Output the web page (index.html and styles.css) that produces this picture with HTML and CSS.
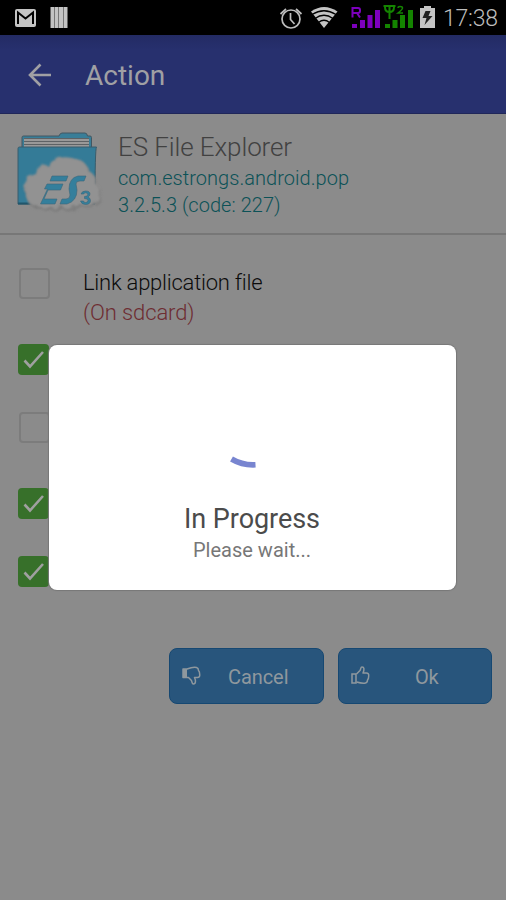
FILE: index.html
```html
<!DOCTYPE html>
<html lang="en">
<head>
<meta charset="utf-8">
<title>Action</title>
<link rel="stylesheet" href="styles.css">
</head>
<body>
<div class="screen">
  <div class="status">
    <svg class="status-left" width="60" height="35" viewBox="0 0 60 35">
      <rect x="7" y="9" width="21" height="18" rx="2" fill="#c4c4c4"/>
      <path d="M10 24V12.500l7.500 6 7.500-6V24" fill="none" stroke="#000" stroke-width="2"/>
      <path d="M42.500 7h17v21h-17z" fill="#c4c4c4"/>
      <path d="M46.500 7v21M50.500 7v21M55.500 7v21" stroke="#777"/>
    </svg>
    <svg class="status-right" width="165" height="35" viewBox="0 0 165 35">
      <g fill="none" stroke="#bdbdbd" stroke-width="1.700">
        <circle cx="21" cy="19" r="9"/>
        <path d="M20.500 13v6.500l4 4.500"/>
        <path d="M10.500 14l5.500-5M26 9l5.500 5"/>
      </g>
      <path d="M41 11.500Q54 2.500 67.500 11.500L54 28z" fill="#c4c4c4"/>
      <path d="M42 14.500Q54 7 66 14.500M45 18.500Q54 12 63 18.500M48.500 22.500Q54 18 59.500 22.500" fill="none" stroke="#000" stroke-width="1.300"/>
      <path d="M82.500 17.500V8H88q2 0 2 2v1q0 2-2 2h-5.500M87 13l3 4.500" fill="none" stroke="#7d00bd" stroke-width="2"/>
      <path d="M82 24h5v4h-5zM90 20h5v8h-5zM97.500 15h5v13h-5zM105 10h5v18h-5z" fill="#7d00bd"/>
      <path d="M113.500 6h12M115 7q0 5 4.500 5t4.500-5M119.500 6v13" fill="none" stroke="#148400" stroke-width="2"/>
      <path d="M128 8q0-1.500 2-1.500 2.500 0 2.500 1.500 0 1.500-4.500 5h5" fill="none" stroke="#148400" stroke-width="1.500"/>
      <path d="M115 24h5v4h-5zM122.500 20h5v8h-5zM130 15h5v13h-5zM138 10h5v18h-5z" fill="#148400"/>
      <path d="M150 8h4V6h7v2h4v20h-15z" fill="#c4c4c4"/>
      <path d="M155.500 11h5l-2 5h4l-8 9 2-7h-4z" fill="#222"/>
    </svg>
    <span class="clock">17:38</span>
  </div>
  <div class="header">
    <svg class="back" width="24" height="24" viewBox="0 0 24 24"><path d="M12.500 1.500L2 12l10.500 10.500M2 12h21" fill="none" stroke="#a0a0a4" stroke-width="2.600"/></svg>
    <span class="title">Action</span>
  </div>
  <div class="app">
    <svg class="logo" width="90" height="90" viewBox="0 0 90 90">
      <defs><filter id="soft" x="-10%" y="-10%" width="120%" height="120%"><feTurbulence type="fractalNoise" baseFrequency=".16" numOctaves="2"/><feDisplacementMap in="SourceGraphic" scale="7"/><feGaussianBlur stdDeviation="1.200"/></filter></defs>
      <path d="M8 20V7.500q0-1.500 1.500-1.500H45q1-3 3-3h23q2 0 2.500 3H76q1.500 0 1.500 1.500V20z" fill="#397e98" stroke="#425762"/>
      <path d="M10 8h65v10H10z" fill="#999"/>
      <path d="M10 8.500h65M10 11.500h65M10 14.500h65" stroke="#5e6265"/>
      <path d="M5.500 17h77q-1.500 2-1.500 57H4V18.500q0-1.500 1.500-1.500z" fill="#347b97" stroke="#3a5d6c"/>
      <path d="M4 73.500h12" stroke="#21566b" stroke-width="2"/>
      <path d="M12 64q-5-13 8-17 2-12 15-11 8-10 22-7 15 1 17 13 7 2 8 13 7 7 3 15-6 8-20 6-8 6-18 2-12 4-21-1-13 2-14-13z" fill="#7c7c7c" filter="url(#soft)" transform="translate(1 1)"/>
      <path d="M12 63q-5-13 8-17 2-12 15-11 8-10 22-7 15 1 17 13 7 2 8 13 7 7 3 15-6 8-20 6-8 5-18 1-12 4-21 0-13 1-14-13z" fill="#929292" filter="url(#soft)"/>
      <g fill="#347f9c" stroke="#3d6678" stroke-width=".6">
        <path d="M38 46h16l-2 5H36zM33 54h16l-2.500 6H34l-4 9h13l-2 5H26.500l7-15h-3z"/>
        <path d="M72 46l-2 5h-4q-4 0-4 3l1 6q0 11-10 14h-7l2-5h4q4 0 4-4l-1-6q0-11 9-13z"/>
        <path d="M67 64q1-3 4.500-3 4.500 0 4.500 3 0 2-2 3 2.500 1 2.500 3.500 0 4-5 4-4 0-5-3.500h3q0 1.500 2 1.500 2.500 0 2.500-2 0-2-3.500-2v-2q3.300 0 3.300-1.700 0-2-2-2-2 0-2 1.200z"/>
      </g>
    </svg>
    <div class="app-text">
      <div class="name">ES File Explorer</div>
      <div class="meta">com.estrongs.android.pop</div>
      <div class="meta">3.2.5.3 (code: 227)</div>
    </div>
  </div>
  <div class="options">
    <div class="option first">
      <span class="box"></span>
      <div class="label"><div class="link">Link application file</div><div class="where">(On sdcard)</div></div>
    </div>
    <div class="option"><span class="box on"><svg viewBox="0 0 31 31"><path d="M6.500 16.500l5.500 6L25 8" /></svg></span></div>
    <div class="option second"><span class="box"></span></div>
    <div class="option third"><span class="box on"><svg viewBox="0 0 31 31"><path d="M6.500 16.500l5.500 6L25 8" /></svg></span></div>
    <div class="option"><span class="box on"><svg viewBox="0 0 31 31"><path d="M6.500 16.500l5.500 6L25 8" /></svg></span></div>
  </div>
  <div class="actions">
    <div class="button">
      <svg width="20" height="20" viewBox="0 0 20 20"><path d="M1 3h4v9H1z" fill="#8f989e"/><path d="M5 3C9 1.500 12 1 14.500 1.500 16 2 16.500 3 16.500 4.500c1 1 1.200 2.500 1.200 4 .3 2-.7 3-2.200 3H12.500c1.500 3 1.300 6.500-1 6.500-2 0-1-2.500-2.500-4L6.500 11.500H1V3z" fill="none" stroke="#8f989e" stroke-width="1.500" stroke-linejoin="round"/></svg>
      <span>Cancel</span>
    </div>
    <div class="button">
      <svg width="20" height="20" viewBox="0 0 20 20"><path d="M1 8h4v9H1z" fill="none" stroke="#8f989e" stroke-width="1.500"/><path d="M5.500 8L9 4.500C10 3 9.500 1 11 1c2.300 0 2.500 2.500 1 6H15.500c1.500 0 2.500 1 2.200 3 0 1.500-.2 3-1.200 4 0 1.500-.5 2.700-2 3C12 17.500 9 17 5.500 16" fill="none" stroke="#8f989e" stroke-width="1.500" stroke-linejoin="round"/></svg>
      <span>Ok</span>
    </div>
  </div>
  <div class="dialog">
    <svg class="spinner" width="30" height="14" viewBox="0 0 30 14"><path d="M2.500 4Q13.500 10.500 26.500 9.800" fill="none" stroke="#7885d0" stroke-width="5.600"/></svg>
    <div class="progress">In Progress</div>
    <div class="wait">Please wait...</div>
  </div>
</div>
</body>
</html>
```
FILE: styles.css
```css
* { box-sizing: border-box; }
body { margin: 0; font-family: Roboto, sans-serif; background: #8b8b8b; }
svg { display: block; flex: none; }
.screen { position: relative; width: 506px; height: 900px; overflow: hidden; background: #8b8b8b; }
.status { height: 35px; background: #000; display: flex; justify-content: space-between; padding-left: 8px; }
.status-right { margin-left: 202px; }
.clock { width: 71px; padding-left: 8px; font-size: 23px; line-height: 38px; color: #bdbdbd; font-weight: 300; letter-spacing: -.2px; white-space: nowrap; }
.header { height: 79px; padding-left: 28px; display: flex; align-items: center; background: linear-gradient(#232b64, #27306e 15px); border-bottom: 1px solid #202759; }
.back { margin-top: 2px; }
.title { margin-left: 33px; padding-top: 2px; font-size: 28px; color: #a0a0a4; }
.app { height: 121px; display: flex; padding: 16px 0 0 14px; border-bottom: 2px solid #777; }
.app-text { margin-left: 14px; }
.name { font-size: 26px; line-height: 35px; font-weight: 300; color: #414141; letter-spacing: -.1px; }
.meta { font-size: 20px; line-height: 27px; font-weight: 300; color: #0c5257; letter-spacing: .04px; }
.options { padding: 33px 0 0 18px; height: 413px; }
.option { display: flex; height: 68px; }
.first { height: 76px; }
.second { height: 76px; }
.box { width: 31px; height: 31px; border: 2px solid #7c7c7c; border-radius: 4px; flex: none; margin-left: 1px; }
.box.on { background: #37702a; border: 0; margin-left: 0; }
.box svg { width: 31px; height: 31px; fill: none; stroke: #a0a0a0; stroke-width: 2.6; }
.label { margin-left: 33px; font-size: 22px; line-height: 30px; font-weight: 300; color: #0b0b0b; }
.link { letter-spacing: -.24px; }
.where { color: #6e2d32; letter-spacing: -.1px; }
.actions { display: flex; gap: 14px; padding-left: 169px; }
.button { width: 154.5px; height: 56px; border: 1px solid #164872; border-radius: 8px; background: #28557c; display: flex; align-items: center; padding-left: 12px; color: #8f989e; font-size: 20px; }
.button span { flex: 1; text-align: center; padding: 2px 8px 0 0; letter-spacing: -.1px; }
.dialog { position: absolute; left: 49px; top: 345px; width: 407px; height: 245px; border-radius: 8px; background: #fff; box-shadow: 0 0 1px 1px #777; display: flex; flex-direction: column; align-items: center; }
.spinner { margin: 110px 0 0 -17px; }
.progress { margin-top: 33px; font-size: 27px; line-height: 34px; color: #4b4b4b; letter-spacing: -.05px; margin-left: -1px; }
.wait { font-size: 20px; line-height: 28px; color: #777; margin-left: -1px; }
```
